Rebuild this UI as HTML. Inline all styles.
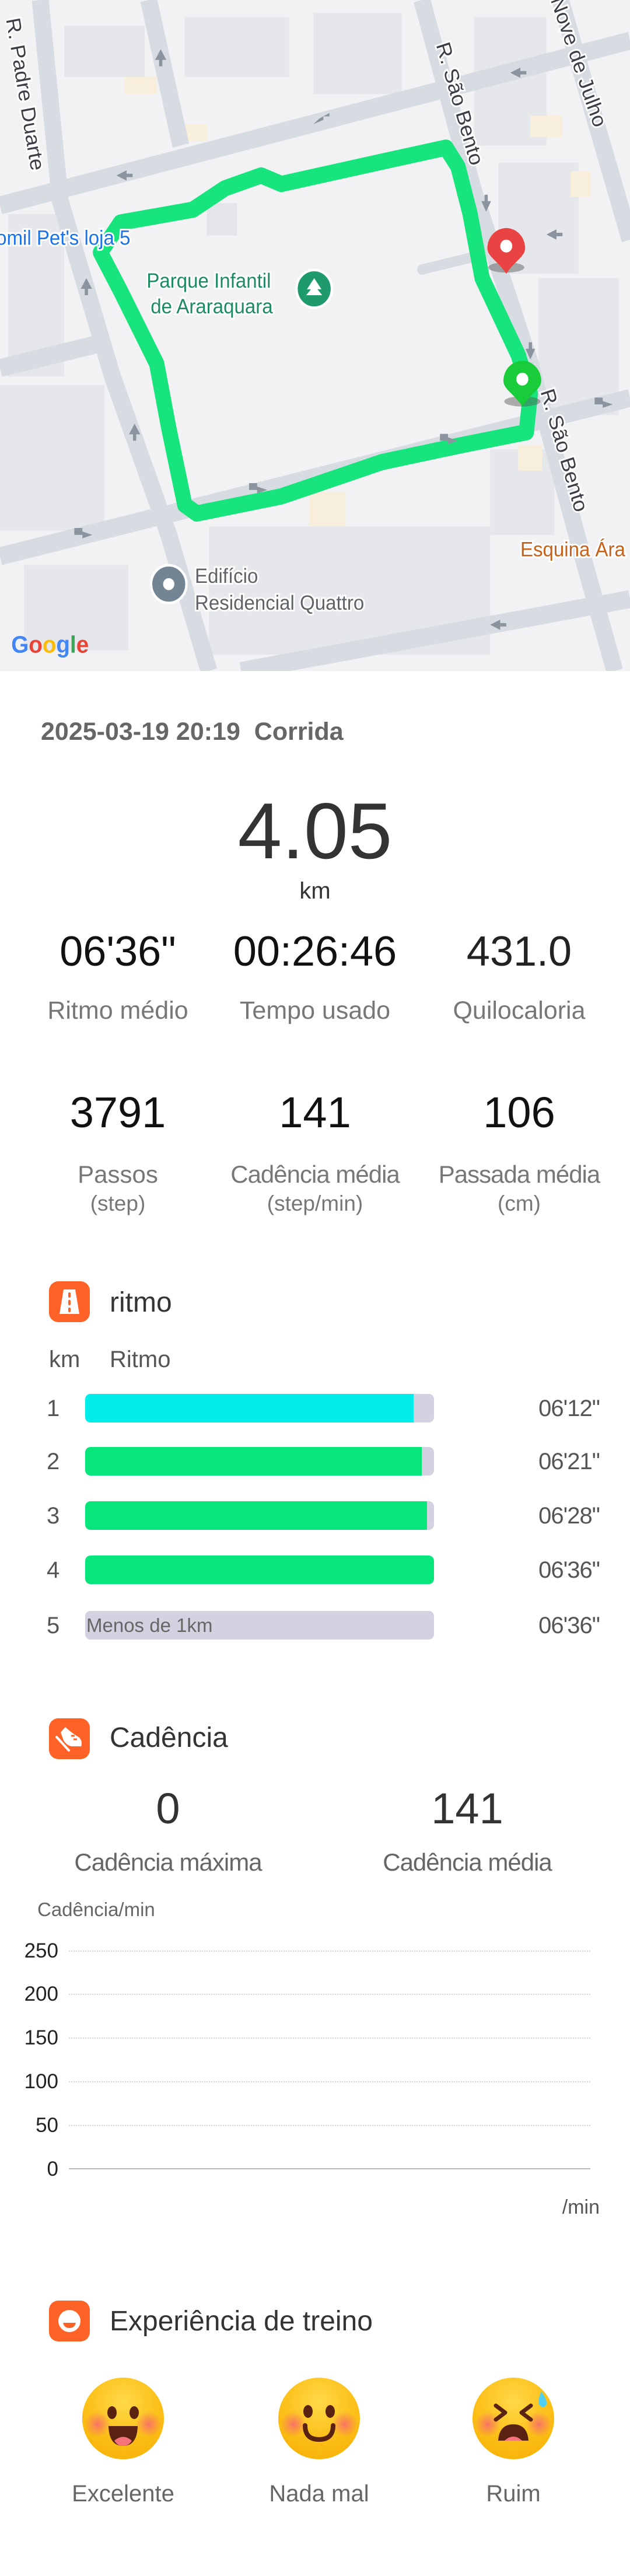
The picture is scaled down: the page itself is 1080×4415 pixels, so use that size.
<!DOCTYPE html>
<html><head><meta charset="utf-8"><style>
*{margin:0;padding:0;box-sizing:border-box}
body{width:1080px;height:4415px;background:#fff;position:relative;font-family:"Liberation Sans",Arial,sans-serif;overflow:hidden}
.a{position:absolute;white-space:nowrap}
.c{transform:translateX(-50%);text-align:center}
.ic{position:absolute;left:84px;width:70px;height:70px;border-radius:16px;background:#FF6227}
.bar{position:absolute;left:146px;width:598px;height:49px;border-radius:9px;background:#D2D2E0;overflow:hidden}
.bar i{position:absolute;left:0;top:0;bottom:0;border-radius:9px 0 0 9px}
.n{position:absolute;left:80px;font-size:40px;line-height:40px;color:#555}
.v{position:absolute;right:52px;font-size:40px;line-height:40px;color:#555;letter-spacing:-1px}
.gl{position:absolute;left:118px;width:894px;border-top:2px dotted #d6d6d6}
.yl{position:absolute;width:100px;text-align:right;font-size:35px;line-height:35px;color:#222;left:0}
</style></head><body>

<svg class="a" style="left:0;top:0" width="1080" height="1150" viewBox="0 0 1568 1568" preserveAspectRatio="none">
<rect width="1568" height="1568" fill="#F2F2F4"/>
<g fill="#E6E7EB">
<rect x="160" y="60" width="200" height="120"/><rect x="460" y="40" width="260" height="140"/><rect x="780" y="30" width="220" height="190"/>
<rect x="20" y="500" width="140" height="380"/><rect x="0" y="900" width="260" height="340"/><rect x="1180" y="40" width="180" height="300"/>
<rect x="1240" y="380" width="200" height="260"/><rect x="1340" y="650" width="200" height="320"/><rect x="520" y="1230" width="700" height="300"/>
<rect x="1220" y="1050" width="160" height="200"/><rect x="60" y="1320" width="260" height="200"/>
</g>
<g fill="#F7EFDC"><rect x="455" y="290" width="60" height="40"/><rect x="310" y="180" width="80" height="40"/><rect x="1320" y="270" width="80" height="50"/><rect x="1420" y="400" width="50" height="60"/><rect x="770" y="1150" width="90" height="80"/><rect x="1290" y="1040" width="60" height="60"/></g>
<g stroke="#D7DBE2" stroke-width="42" fill="none" stroke-linecap="butt">
<path d="M0 480 L1568 95"/>
<path d="M0 1300 L1568 930"/>
<path d="M600 1568 L1568 1400"/>
<path d="M100 0 L150 470 L280 880 L420 1250 L520 1568"/>
<path d="M1050 0 L1180 450 L1320 850 L1450 1300 L1530 1568"/>
<path d="M1395 0 L1568 560"/>
<path d="M370 0 L450 340"/>
<path d="M1050 630 L1180 600" stroke-width="24" stroke-linecap="round"/>
<path d="M0 860 L260 800"/>
</g>
<rect x="515" y="475" width="75" height="75" fill="#E4E5E9"/>
<path d="M250 590 L300 520 L480 490 L560 440 L650 410 L700 430 L940 380 L1110 345 L1140 390 L1170 500 L1200 650 L1290 830 L1320 920 L1310 1010 L1150 1040 L950 1080 L700 1160 L490 1200 L460 1180 L420 1000 L390 850 L300 680 Z" fill="none" stroke="#18E47D" stroke-width="38" stroke-linejoin="round"/>
<path d="M520 470 Q600 390 680 430" fill="none" stroke="#18E47D" stroke-width="22"/>
<g fill="#8A939E"><path d="M400 115 l-14 25 h10 v15 h8 v-15 h10z"/><path d="M780 290 l25 -10 v-8 h15 v-8 l-25 13z"/><path d="M290 410 l25 -12 v8 h15 v8 h-15 v8z"/><path d="M1270 170 l25 -12 v8 h15 v8 h-15 v8z"/><path d="M1360 548 l25 -12 v8 h15 v8 h-15 v8z"/><path d="M1210 495 l-12 -25 h8 v-15 h8 v15 h8z"/><path d="M1320 840 l-12 -25 h8 v-15 h8 v15 h8z"/><path d="M215 650 l-14 25 h10 v15 h8 v-15 h10z"/><path d="M335 990 l-14 25 h10 v15 h8 v-15 h10z"/><path d="M230 1250 l-25 -8 v-8 h-20 v16 h20 v8z"/><path d="M665 1145 l-25 -8 v-8 h-20 v16 h20 v8z"/><path d="M1525 945 l-25 -8 v-8 h-20 v16 h20 v8z"/><path d="M1140 1030 l-25 -8 v-8 h-20 v16 h20 v8z"/><path d="M1220 1460 l25 -12 v8 h15 v8 h-15 v8z"/></g>
<g font-family="Liberation Sans, sans-serif" font-size="50" fill="#3b3f45" stroke="#fff" stroke-width="8" paint-order="stroke">
<text transform="translate(15,45) rotate(80)">R. Padre Duarte</text>
<text transform="translate(1085,105) rotate(73)">R. São Bento</text>
<text transform="translate(1370,0) rotate(70)">Nove de Julho</text>
<text transform="translate(1345,915) rotate(73)">R. São Bento</text>
</g>
<g font-family="Liberation Sans, sans-serif" font-size="48" stroke="#fff" stroke-width="8" paint-order="stroke">
<text x="-10" y="572" fill="#1A73E8">omil Pet's loja 5</text>
<text x="365" y="672" fill="#1E8A62">Parque Infantil</text>
<text x="375" y="732" fill="#1E8A62">de Araraquara</text>
<text x="485" y="1362" fill="#5f6368">Edifício</text>
<text x="485" y="1425" fill="#5f6368">Residencial Quattro</text>
<text x="1295" y="1300" fill="#C5621A">Esquina Ára</text>
</g>
<circle cx="782" cy="675" r="44" fill="#1E9A6C" stroke="#fff" stroke-width="6"/><path d="M782 650 l-18 26 h10 l-12 14 h40 l-12 -14 h10z" fill="#fff"/>
<circle cx="420" cy="1365" r="44" fill="#738593" stroke="#fff" stroke-width="6"/><circle cx="420" cy="1365" r="14" fill="#fff"/>
<ellipse cx="1260" cy="625" rx="45" ry="12" fill="#555" opacity=".45"/>
<path d="M1260 640 C1240 610 1213 600 1213 580 A47 47 0 0 1 1307 580 C1307 600 1280 610 1260 640Z" fill="#EA4343"/><circle cx="1260" cy="575" r="15" fill="#fff"/>
<ellipse cx="1300" cy="938" rx="45" ry="12" fill="#555" opacity=".45"/>
<path d="M1300 950 C1280 920 1253 910 1253 890 A47 47 0 0 1 1347 890 C1347 910 1320 920 1300 950Z" fill="#19CC3A"/><circle cx="1300" cy="886" r="15" fill="#fff"/>
<text x="28" y="1525" font-family="Liberation Sans, sans-serif" font-size="56" font-weight="bold"><tspan fill="#4285F4">G</tspan><tspan fill="#EA4335">o</tspan><tspan fill="#FBBC05">o</tspan><tspan fill="#4285F4">g</tspan><tspan fill="#34A853">l</tspan><tspan fill="#EA4335">e</tspan></text>
</svg>

<div class="a" style="left:70px;top:1233px;font-size:43px;line-height:43px;font-weight:bold;color:#666">2025-03-19 20:19&nbsp; Corrida</div>
<div class="a c" style="left:540px;top:1356px;font-size:136px;line-height:136px;color:#333">4.05</div>
<div class="a c" style="left:540px;top:1507px;font-size:40px;line-height:40px;color:#333">km</div>

<div class="a c" style="left:202px;top:1595px;font-size:72px;line-height:72px;color:#111">06'36"</div>
<div class="a c" style="left:540px;top:1595px;font-size:72px;line-height:72px;color:#111">00:26:46</div>
<div class="a c" style="left:890px;top:1595px;font-size:72px;line-height:72px;color:#222">431.0</div>
<div class="a c" style="left:202px;top:1711px;font-size:43px;line-height:43px;color:#777">Ritmo médio</div>
<div class="a c" style="left:540px;top:1711px;font-size:43px;line-height:43px;color:#777">Tempo usado</div>
<div class="a c" style="left:890px;top:1711px;font-size:43px;line-height:43px;color:#777">Quilocaloria</div>

<div class="a c" style="left:202px;top:1870px;font-size:74px;line-height:74px;color:#111">3791</div>
<div class="a c" style="left:540px;top:1870px;font-size:74px;line-height:74px;color:#111">141</div>
<div class="a c" style="left:890px;top:1870px;font-size:74px;line-height:74px;color:#111">106</div>
<div class="a c" style="left:202px;top:1992px;font-size:42px;line-height:42px;color:#777">Passos</div>
<div class="a c" style="left:540px;top:1992px;font-size:42px;line-height:42px;color:#777;letter-spacing:-1px">Cadência média</div>
<div class="a c" style="left:890px;top:1992px;font-size:42px;line-height:42px;color:#777;letter-spacing:-1px">Passada média</div>
<div class="a c" style="left:202px;top:2044px;font-size:37px;line-height:37px;color:#777">(step)</div>
<div class="a c" style="left:540px;top:2044px;font-size:37px;line-height:37px;color:#777">(step/min)</div>
<div class="a c" style="left:890px;top:2044px;font-size:37px;line-height:37px;color:#777">(cm)</div>

<div class="ic" style="top:2196px"><svg width="70" height="70" viewBox="0 0 70 70"><path d="M25 14 H45 L52 56 H18 Z" fill="#fff"/><g fill="#FF6227"><rect x="33" y="19" width="4" height="9" rx="2"/><rect x="33" y="32" width="4" height="9" rx="2"/><rect x="33" y="45" width="4" height="8" rx="2"/></g></svg></div>
<div class="a" style="left:188px;top:2209px;font-size:48px;line-height:48px;color:#333">ritmo</div>
<div class="a" style="left:84px;top:2310px;font-size:40px;line-height:40px;color:#555">km</div>
<div class="a" style="left:188px;top:2310px;font-size:40px;line-height:40px;color:#555">Ritmo</div>

<div class="n" style="top:2394px">1</div><div class="bar" style="top:2389px"><i style="width:563px;background:#00EDEA"></i></div><div class="v" style="top:2394px">06'12"</div>
<div class="n" style="top:2485px">2</div><div class="bar" style="top:2480px"><i style="width:577px;background:#06E67A"></i></div><div class="v" style="top:2485px">06'21"</div>
<div class="n" style="top:2578px">3</div><div class="bar" style="top:2573px"><i style="width:586px;background:#06E67A"></i></div><div class="v" style="top:2578px">06'28"</div>
<div class="n" style="top:2671px">4</div><div class="bar" style="top:2666px"><i style="width:598px;background:#06E67A;border-radius:9px"></i></div><div class="v" style="top:2671px">06'36"</div>
<div class="n" style="top:2766px">5</div><div class="bar" style="top:2761px"><span style="position:absolute;left:2px;top:8px;font-size:33px;line-height:33px;color:#666">Menos de 1km</span></div><div class="v" style="top:2766px">06'36"</div>

<div class="ic" style="top:2945px"><svg width="70" height="70" viewBox="0 0 70 70"><path d="M20 24 L28 15 L36 22 L44 28 L52 33 Q58 40 55 48 L38 48 Q30 46 25 38 Z" fill="#fff"/><path d="M13 32 L34 55" stroke="#fff" stroke-width="4" stroke-linecap="round"/><path d="M38 30 h6 M42 36 h6" stroke="#FF6227" stroke-width="3"/></svg></div>
<div class="a" style="left:188px;top:2955px;font-size:48px;line-height:48px;color:#333">Cadência</div>
<div class="a c" style="left:288px;top:3063px;font-size:74px;line-height:74px;color:#333">0</div>
<div class="a c" style="left:801px;top:3063px;font-size:74px;line-height:74px;color:#333">141</div>
<div class="a c" style="left:288px;top:3171px;font-size:42px;line-height:42px;color:#666;letter-spacing:-1px">Cadência máxima</div>
<div class="a c" style="left:801px;top:3171px;font-size:42px;line-height:42px;color:#666;letter-spacing:-1px">Cadência média</div>
<div class="a" style="left:64px;top:3256px;font-size:33px;line-height:34px;color:#666">Cadência/min</div>

<div class="gl" style="top:3343px"></div><div class="yl" style="top:3326px">250</div>
<div class="gl" style="top:3417px"></div><div class="yl" style="top:3400px">200</div>
<div class="gl" style="top:3492px"></div><div class="yl" style="top:3475px">150</div>
<div class="gl" style="top:3567px"></div><div class="yl" style="top:3550px">100</div>
<div class="gl" style="top:3642px"></div><div class="yl" style="top:3625px">50</div>
<div class="gl" style="top:3716px;border-top:2px solid #bbb"></div><div class="yl" style="top:3700px">0</div>
<div class="a" style="right:52px;top:3766px;font-size:34px;line-height:34px;color:#555">/min</div>

<div class="ic" style="top:3943px"><svg width="70" height="70" viewBox="0 0 70 70"><circle cx="35" cy="35" r="19" fill="#fff"/><path d="M24 38 H46 Q44 47 35 47 Q26 47 24 38Z" fill="#FF6227"/></svg></div>
<div class="a" style="left:188px;top:3955px;font-size:48px;line-height:48px;color:#333">Experiência de treino</div>

<svg class="a" style="left:0;top:4070px" width="1080" height="150" viewBox="0 0 1080 150">
<defs><radialGradient id="g" cx="50%" cy="30%" r="70%"><stop offset="0" stop-color="#FFD94A"/><stop offset=".6" stop-color="#FCC11A"/><stop offset="1" stop-color="#F8B40A"/></radialGradient>
<radialGradient id="b"><stop offset="0" stop-color="#F86C6C" stop-opacity=".9"/><stop offset="1" stop-color="#F86C6C" stop-opacity="0"/></radialGradient></defs>
<g transform="translate(211,75)"><circle r="70" fill="#FBC416"/><circle r="70" fill="url(#g)"/><circle cx="-44" cy="10" r="22" fill="url(#b)"/><circle cx="44" cy="10" r="22" fill="url(#b)"/><ellipse cx="-19" cy="-10" rx="8" ry="11" fill="#5A2210"/><ellipse cx="19" cy="-10" rx="8" ry="11" fill="#5A2210"/><path d="M-25 13 H25 Q24 47 0 47 Q-24 47 -25 13Z" fill="#5A2210"/><path d="M-15 38 Q0 25 15 38 Q10 47 0 47 Q-10 47 -15 38Z" fill="#F5747A"/></g>
<g transform="translate(547,75)"><circle r="70" fill="url(#g)"/><circle cx="-44" cy="10" r="22" fill="url(#b)"/><circle cx="44" cy="10" r="22" fill="url(#b)"/><ellipse cx="-19" cy="-12" rx="8" ry="11" fill="#5A2210"/><ellipse cx="19" cy="-12" rx="8" ry="11" fill="#5A2210"/><path d="M-24 12 Q-24 36 0 36 Q24 36 24 12" fill="none" stroke="#5A2210" stroke-width="8" stroke-linecap="round"/></g>
<g transform="translate(880,75)"><circle r="70" fill="url(#g)"/><circle cx="-44" cy="10" r="22" fill="url(#b)"/><circle cx="44" cy="10" r="22" fill="url(#b)"/><path d="M-30 -22 L-14 -10 L-30 2 M30 -22 L14 -10 L30 2" fill="none" stroke="#5A2210" stroke-width="7" stroke-linecap="round" stroke-linejoin="round"/><path d="M-26 38 Q-24 10 0 10 Q24 10 26 38 Z" fill="#5A2210"/><path d="M-15 38 Q0 24 15 38Z" fill="#F5747A"/><path d="M48 -46 Q60 -30 56 -22 Q50 -16 44 -24 Q42 -34 48 -46Z" fill="#4FD0F0"/></g>
</svg>
<div class="a c" style="left:211px;top:4254px;font-size:40px;line-height:40px;color:#666">Excelente</div>
<div class="a c" style="left:547px;top:4254px;font-size:40px;line-height:40px;color:#666">Nada mal</div>
<div class="a c" style="left:880px;top:4254px;font-size:40px;line-height:40px;color:#666">Ruim</div>
</body></html>
